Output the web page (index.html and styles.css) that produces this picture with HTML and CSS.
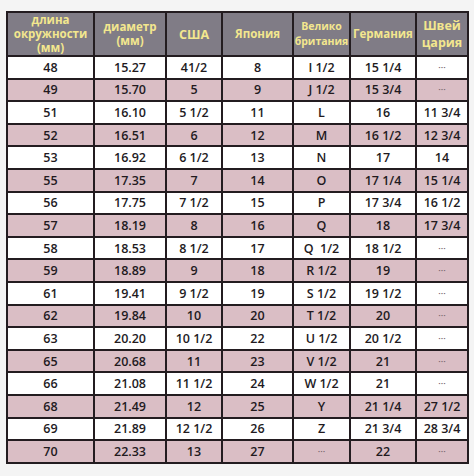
FILE: index.html
```html
<!DOCTYPE html>
<html>
<head>
<meta charset="utf-8">
<link rel="stylesheet" href="styles.css">
</head>
<body>
<div class="page">
<table class="sizes">
<colgroup>
<col class="c1"><col class="c2"><col class="c3"><col class="c4"><col class="c5"><col class="c6"><col class="c7">
</colgroup>
<thead>
<tr>
<th>длина<br>окружности<br>(мм)</th>
<th>диаметр<br>(мм)</th>
<th class="big">США</th>
<th>Япония</th>
<th class="small">Велико<br>британия</th>
<th>Германия</th>
<th class="big">Швей<br>цария</th>
</tr>
</thead>
<tbody>
<tr><td>48</td><td>15.27</td><td>41/2</td><td>8</td><td>I 1/2</td><td>15 1/4</td><td class="dots">···</td></tr>
<tr class="pink"><td>49</td><td>15.70</td><td>5</td><td>9</td><td>J 1/2</td><td>15 3/4</td><td class="dots">···</td></tr>
<tr><td>51</td><td>16.10</td><td>5 1/2</td><td>11</td><td>L</td><td>16</td><td>11 3/4</td></tr>
<tr class="pink"><td>52</td><td>16.51</td><td>6</td><td>12</td><td>M</td><td>16 1/2</td><td>12 3/4</td></tr>
<tr><td>53</td><td>16.92</td><td>6 1/2</td><td>13</td><td>N</td><td>17</td><td>14</td></tr>
<tr class="pink"><td>55</td><td>17.35</td><td>7</td><td>14</td><td>O</td><td>17 1/4</td><td>15 1/4</td></tr>
<tr><td>56</td><td>17.75</td><td>7 1/2</td><td>15</td><td>P</td><td>17 3/4</td><td>16 1/2</td></tr>
<tr class="pink"><td>57</td><td>18.19</td><td>8</td><td>16</td><td>Q</td><td>18</td><td>17 3/4</td></tr>
<tr><td>58</td><td>18.53</td><td>8 1/2</td><td>17</td><td>Q&nbsp; 1/2</td><td>18 1/2</td><td class="dots">···</td></tr>
<tr class="pink"><td>59</td><td>18.89</td><td>9</td><td>18</td><td>R 1/2</td><td>19</td><td class="dots">···</td></tr>
<tr><td>61</td><td>19.41</td><td>9 1/2</td><td>19</td><td>S 1/2</td><td>19 1/2</td><td class="dots">···</td></tr>
<tr class="pink"><td>62</td><td>19.84</td><td>10</td><td>20</td><td>T 1/2</td><td>20</td><td class="dots">···</td></tr>
<tr><td>63</td><td>20.20</td><td>10 1/2</td><td>22</td><td>U 1/2</td><td>20 1/2</td><td class="dots">···</td></tr>
<tr class="pink"><td>65</td><td>20.68</td><td>11</td><td>23</td><td>V 1/2</td><td>21</td><td class="dots">···</td></tr>
<tr><td>66</td><td>21.08</td><td>11 1/2</td><td>24</td><td>W 1/2</td><td>21</td><td class="dots">···</td></tr>
<tr class="pink"><td>68</td><td>21.49</td><td>12</td><td>25</td><td>Y</td><td>21 1/4</td><td>27 1/2</td></tr>
<tr><td>69</td><td>21.89</td><td>12 1/2</td><td>26</td><td>Z</td><td>21 3/4</td><td>28 3/4</td></tr>
<tr class="pink"><td>70</td><td>22.33</td><td>13</td><td>27</td><td class="dots">···</td><td>22</td><td class="dots">···</td></tr>
</tbody>
</table>
</div>
</body>
</html>
```
FILE: styles.css
```css
html, body {
  margin: 0;
  padding: 0;
  background: #f4f4f4;
}
.page {
  padding: 11px 0 0 6px;
  width: 474px;
  height: 476px;
  box-sizing: border-box;
}
.sizes {
  border-collapse: collapse;
  table-layout: fixed;
  width: 461px;
  background: #ffffff;
  font-family: "Open Sans", "Liberation Sans", sans-serif;
}
.c1 { width: 87px; }
.c2 { width: 72px; }
.c3 { width: 56px; }
.c4 { width: 71px; }
.c5 { width: 57px; }
.c6 { width: 66px; }
.c7 { width: 52px; }
.sizes th,
.sizes td {
  border: 2px solid #231c20;
  text-align: center;
  padding: 0;
  overflow: hidden;
  white-space: nowrap;
}
.sizes th {
  background: #807c86;
  color: #f3e78e;
  font-weight: 700;
  font-size: 11.5px;
  line-height: 14px;
  height: 38px;
}
.sizes th.big {
  font-size: 12.5px;
  line-height: 17px;
}
.sizes th.small {
  font-size: 10.5px;
  line-height: 15px;
}
.sizes td {
  color: #221a1e;
  font-weight: 600;
  font-size: 12.5px;
  height: 20.6px;
  line-height: 17px;
}
.sizes tr.pink td {
  background: #dabec5;
}
.sizes td.dots {
  color: #7a6a70;
  font-size: 9px;
  letter-spacing: 0;
}
```
